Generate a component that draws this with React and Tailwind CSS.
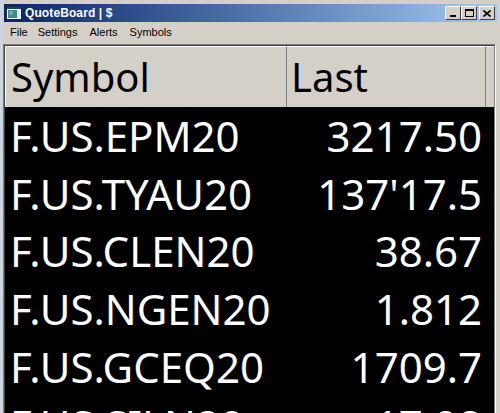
import React from "react";

const rows = [
  ["F.US.EPM20", "3217.50"],
  ["F.US.TYAU20", "137'17.5"],
  ["F.US.CLEN20", "38.67"],
  ["F.US.NGEN20", "1.812"],
  ["F.US.GCEQ20", "1709.7"],
  ["F.US.SILN20", "17.98"],
];

function WinIcon() {
  return (
    <svg width="16" height="16" viewBox="0 0 16 16">
      <rect x="0.5" y="1.5" width="15" height="13" fill="#ffffff" stroke="#1a2a4a" />
      <rect x="1" y="2" width="14" height="2" fill="#1a3a7a" />
      <rect x="2" y="5" width="9" height="8" fill="#3a8a8a" />
      <rect x="11" y="5" width="3" height="8" fill="#e8e8e8" />
      <rect x="3" y="6" width="4" height="4" fill="#5fb0a8" />
    </svg>
  );
}

function CapBtn({ children, className = "" }) {
  return (
    <div
      className={
        "w-[16px] h-[14px] bg-[#d4d0c8] border border-t-white border-l-white border-r-[#404040] border-b-[#404040] flex items-center justify-center " +
        className
      }
    >
      {children}
    </div>
  );
}

export default function App() {
  return (
    <div className="w-[500px] h-[413px] overflow-hidden bg-[#d4d0c8] flex">
      <div className="w-[2px] h-full bg-[#c8d8e8] shrink-0" />
      <div className="flex-1 flex flex-col pt-[4px] pl-[2px] pr-[3px] min-w-0">
        {/* Title bar */}
        <div className="h-[18px] shrink-0 flex items-center bg-gradient-to-r from-[#0a246a] to-[#a6caf0] pl-[2px] pr-[2px]">
          <WinIcon />
          <span
            className="ml-[3px] text-white font-bold text-[12px] leading-none whitespace-nowrap tracking-[0.1px]"
            style={{ fontFamily: '"Liberation Sans", Arial, sans-serif' }}
          >
            QuoteBoard | $
          </span>
          <div className="ml-auto flex items-center">
            <CapBtn>
              <div className="w-[6px] h-[2px] bg-black mt-[6px]" />
            </CapBtn>
            <CapBtn>
              <div className="w-[9px] h-[8px] border border-black border-t-2" />
            </CapBtn>
            <CapBtn className="ml-[2px]">
              <svg width="8" height="7" viewBox="0 0 8 7">
                <path d="M0.5 0.5 L7.5 6.5 M7.5 0.5 L0.5 6.5" stroke="#000" strokeWidth="1.6" />
              </svg>
            </CapBtn>
          </div>
        </div>
        {/* Menu bar */}
        <div
          className="h-[20px] shrink-0 flex items-center text-[11px] text-black leading-none"
          style={{ fontFamily: '"Liberation Sans", Arial, sans-serif' }}
        >
          <span className="ml-[6px]">File</span>
          <span className="ml-[10px]">Settings</span>
          <span className="ml-[12px]">Alerts</span>
          <span className="ml-[12px]">Symbols</span>
        </div>
        {/* Grid */}
        <div
          className="mt-[2px] ml-[-1px] mr-[1px] flex-1 min-h-0 flex flex-col border-t border-l border-t-[#808080] border-l-[#808080] border-r border-r-white"
          style={{ fontFamily: '"Noto Sans", "Open Sans", sans-serif' }}
        >
          <div className="flex-1 min-h-0 flex flex-col border-t border-l border-t-[#404040] border-l-[#404040] border-r border-r-[#808080] bg-black">
            {/* Header */}
            <div className="h-[61px] shrink-0 flex bg-[#d4d0c8] text-black text-[40px] leading-none">
              <div className="w-[282px] shrink-0 flex items-center pl-[5px] border-t border-l border-white border-r border-r-[#808080]">
                Symbol
              </div>
              <div className="w-[199px] shrink-0 flex items-center pl-[4px] border-t border-t-white border-r border-r-[#808080]">
                Last
              </div>
              <div className="flex-1 border-t border-t-white" />
            </div>
            {/* Rows */}
            <div className="flex-1 min-h-0 overflow-hidden text-white text-[42px] leading-none">
              {rows.map(([s, v]) => (
                <div key={s} className="h-[57.75px] flex items-center">
                  <div className="w-[282px] shrink-0 pl-[5px] whitespace-nowrap">{s}</div>
                  <div className="w-[199px] shrink-0 pr-[4px] text-right whitespace-nowrap">{v}</div>
                </div>
              ))}
            </div>
          </div>
        </div>
      </div>
    </div>
  );
}
